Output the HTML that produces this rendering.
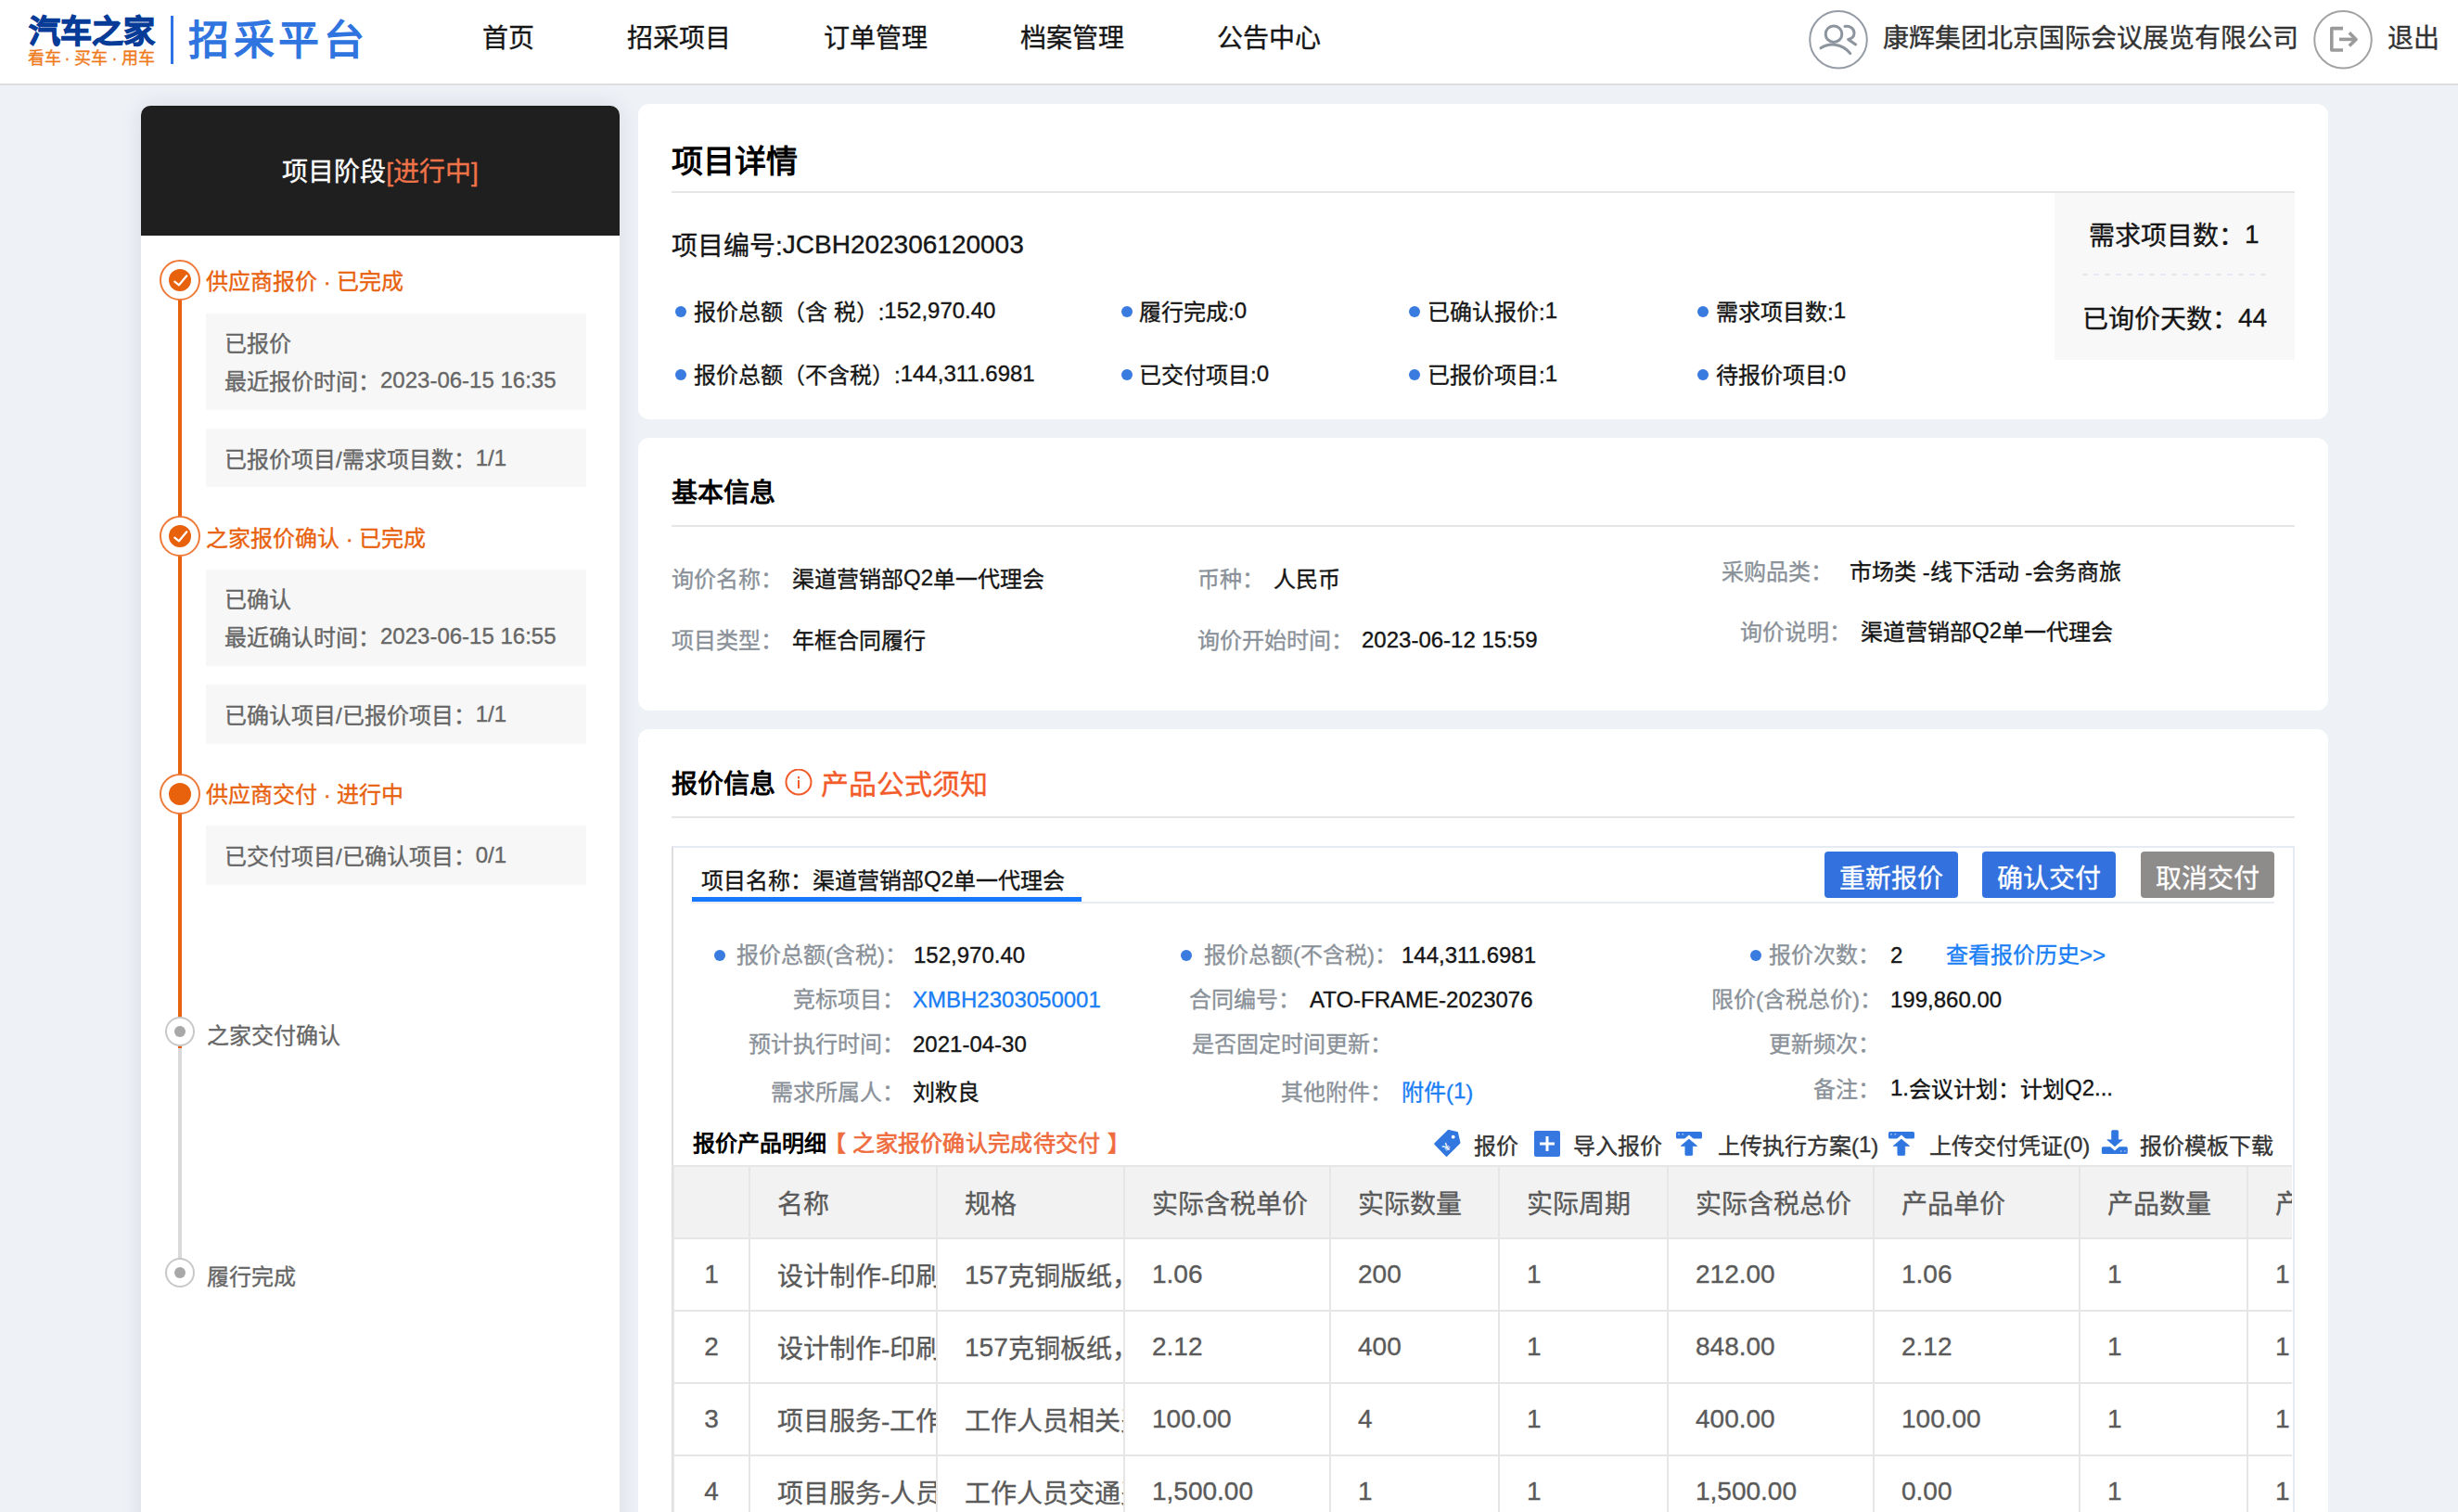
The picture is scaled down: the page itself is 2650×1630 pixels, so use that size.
<!DOCTYPE html>
<html lang="zh-CN">
<head>
<meta charset="utf-8">
<style>
html,body{margin:0;padding:0;}
body{width:2650px;height:1630px;overflow:hidden;position:relative;background:#eef1f6;font-family:"Liberation Sans",sans-serif;color:#151515;font-weight:500;-webkit-text-stroke-width:0.35px;}
.a{position:absolute;}
.t{position:absolute;white-space:nowrap;line-height:1;}
.s24{font-size:24px;}
.s28{font-size:28px;}
.L{position:relative;top:-2px;}
.b{font-weight:bold;-webkit-text-stroke-width:0;}
.hdr{left:0;top:0;width:2650px;height:90px;background:#fff;border-bottom:2px solid #dedede;}
.card{position:absolute;background:#fff;border-radius:12px;}
.div{position:absolute;height:2px;background:#e6e6e6;}
.dot{position:absolute;width:12px;height:12px;border-radius:50%;background:#3a7be0;}
.lbl{color:#8a9199;}
.gbox{position:absolute;left:222px;width:410px;background:#f7f7f7;}
.gt{color:#666;font-size:24px;}
.org{color:#e8620e;}
.btn{position:absolute;top:918px;width:144px;height:50px;border-radius:4px;color:#fff;font-size:28px;line-height:59px;text-align:center;overflow:hidden;}
.tb{position:absolute;top:1256px;left:725px;width:1746px;height:400px;overflow:hidden;}
.tb table{border-collapse:collapse;table-layout:fixed;width:1897px;font-size:28px;color:#5a5a5a;}
.tb td{border:2px solid #e6e6e6;height:76px;padding:0 0 0 29px;white-space:nowrap;overflow:hidden;}
.tb tr.h td{background:#f2f2f2;}
.tb td.c{text-align:center;padding:0;}
</style>
</head>
<body>
<!-- HEADER -->
<div class="a hdr"></div>
<div class="t b" style="left:31px;top:17px;font-size:34px;color:#063c98;letter-spacing:0px;-webkit-text-stroke:1.2px #063c98;">汽车之家</div>
<div class="t" style="left:30px;top:54px;font-size:18px;color:#ee7a1c;">看车</div>
<div class="t" style="left:57px;top:54px;font-size:18px;color:#ee7a1c;width:31px;text-align:center;">·</div>
<div class="t" style="left:80px;top:54px;font-size:18px;color:#ee7a1c;">买车</div>
<div class="t" style="left:108px;top:54px;font-size:18px;color:#ee7a1c;width:31px;text-align:center;">·</div>
<div class="t" style="left:131px;top:54px;font-size:18px;color:#ee7a1c;">用车</div>
<div class="a" style="left:184px;top:17px;width:3px;height:52px;background:#2d73e6;"></div>
<div class="t b" style="left:203px;top:22px;font-size:44px;color:#2f74df;letter-spacing:4.6px;">招采平台</div>

<div class="t s28" style="left:520px;top:28px;">首页</div>
<div class="t s28" style="left:676px;top:28px;">招采项目</div>
<div class="t s28" style="left:888px;top:28px;">订单管理</div>
<div class="t s28" style="left:1100px;top:28px;">档案管理</div>
<div class="t s28" style="left:1312px;top:28px;">公告中心</div>

<svg class="a" style="left:1949px;top:10px;" width="66" height="66" viewBox="0 0 66 66">
<circle cx="33" cy="32.8" r="30.8" fill="none" stroke="#959ca6" stroke-width="2"/>
<g fill="none" stroke="#8c949e" stroke-width="3" stroke-linecap="round" stroke-linejoin="round">
<circle cx="28" cy="26.7" r="8.8"/>
<path d="M14 41.8 C22 36.5 36 35.5 45.8 47.6"/>
<path d="M40 18.4 C46 17.6 50 21 50 25.6 C50 29.5 47.2 31.8 43.6 32.4 L51.6 38"/>
</g>
</svg>
<div class="t s28" style="left:2030px;top:28px;color:#333;">康辉集团北京国际会议展览有限公司</div>
<svg class="a" style="left:2493px;top:10px;" width="66" height="66" viewBox="0 0 66 66">
<circle cx="33" cy="32.8" r="30.8" fill="none" stroke="#a3a3a3" stroke-width="2"/>
<g fill="none" stroke="#9a9a9a" stroke-width="3.6" stroke-linejoin="round">
<path d="M33 20.6 H20.8 V44 H33"/>
<path d="M29 32.4 H46.5"/>
<path d="M39.8 25.2 L47 32.4 L39.8 39.6"/>
</g>
</svg>
<div class="t s28" style="left:2574px;top:28px;color:#333;">退出</div>

<!-- SIDEBAR -->
<div class="a" style="left:152px;top:114px;width:516px;height:1600px;background:#fff;border-radius:10px 10px 0 0;box-shadow:0 0 24px rgba(30,40,80,0.10);"></div>
<div class="a" style="left:152px;top:114px;width:516px;height:140px;background:#1f1f1f;border-radius:10px 10px 0 0;"></div>
<div class="t s28" style="left:152px;width:516px;text-align:center;top:172px;color:#fff;">项目阶段<span style="color:#ef7348">[进行中]</span></div>

<div class="gbox" style="top:338px;height:104px;"></div>
<div class="gbox" style="top:462px;height:63px;"></div>
<div class="gbox" style="top:614px;height:104px;"></div>
<div class="gbox" style="top:738px;height:64px;"></div>
<div class="gbox" style="top:890px;height:64px;"></div>

<div class="t org s24" style="left:222px;top:292px;">供应商报价 · 已完成</div>
<div class="t gt" style="left:242px;top:359px;">已报价</div>
<div class="t gt" style="left:242px;top:400px;">最近报价时间：<span class="L">2023-06-15</span> <span class="L">16:35</span></div>
<div class="t gt" style="left:242px;top:484px;">已报价项目/需求项目数：<span class="L">1/1</span></div>

<div class="t org s24" style="left:222px;top:569px;">之家报价确认 · 已完成</div>
<div class="t gt" style="left:242px;top:635px;">已确认</div>
<div class="t gt" style="left:242px;top:676px;">最近确认时间：<span class="L">2023-06-15</span> <span class="L">16:55</span></div>
<div class="t gt" style="left:242px;top:760px;">已确认项目/已报价项目：<span class="L">1/1</span></div>

<div class="t org s24" style="left:222px;top:845px;">供应商交付 · 进行中</div>
<div class="t gt" style="left:242px;top:912px;">已交付项目/已确认项目：<span class="L">0/1</span></div>

<div class="t gt" style="left:223px;top:1105px;">之家交付确认</div>
<div class="t gt" style="left:223px;top:1365px;">履行完成</div>

<div class="a" style="left:192px;top:322px;width:4px;height:808px;background:#e8620e;"></div>
<div class="a" style="left:192px;top:1130px;width:4px;height:228px;background:#d9d9d9;"></div>

<svg class="a" style="left:170px;top:278px;" width="48" height="48" viewBox="0 0 48 48">
<circle cx="24" cy="24" r="21" fill="#fff" stroke="#ee7a3a" stroke-width="2"/>
<circle cx="24" cy="24" r="12" fill="#e8620e"/>
<path d="M18.3 25.6 L23 29.3 L31.3 19.3" fill="none" stroke="#fff" stroke-width="2.2" stroke-linecap="round" stroke-linejoin="round"/>
</svg>
<svg class="a" style="left:170px;top:554px;" width="48" height="48" viewBox="0 0 48 48">
<circle cx="24" cy="24" r="21" fill="#fff" stroke="#ee7a3a" stroke-width="2"/>
<circle cx="24" cy="24" r="12" fill="#e8620e"/>
<path d="M18.3 25.6 L23 29.3 L31.3 19.3" fill="none" stroke="#fff" stroke-width="2.2" stroke-linecap="round" stroke-linejoin="round"/>
</svg>
<svg class="a" style="left:170px;top:832px;" width="48" height="48" viewBox="0 0 48 48">
<circle cx="24" cy="24" r="21" fill="#fff" stroke="#ee7a3a" stroke-width="2"/>
<circle cx="24" cy="24" r="12" fill="#e8620e"/>
</svg>
<svg class="a" style="left:176px;top:1094px;" width="36" height="36" viewBox="0 0 36 36">
<circle cx="18" cy="18" r="15" fill="#fff" stroke="#c8c8c8" stroke-width="2"/>
<circle cx="18" cy="18" r="6" fill="#a8a8a8"/>
</svg>
<svg class="a" style="left:176px;top:1354px;" width="36" height="36" viewBox="0 0 36 36">
<circle cx="18" cy="18" r="15" fill="#fff" stroke="#c8c8c8" stroke-width="2"/>
<circle cx="18" cy="18" r="6" fill="#a8a8a8"/>
</svg>

<!-- CARD 1 -->
<div class="card" style="left:688px;top:112px;width:1822px;height:340px;"></div>
<div class="t b" style="left:724px;top:157px;font-size:34px;color:#000;">项目详情</div>
<div class="div" style="left:724px;top:206px;width:1750px;"></div>
<div class="t s28" style="left:724px;top:252px;">项目编号:<span class="L">JCBH202306120003</span></div>


<div class="dot" style="left:728px;top:330px;"></div>
<div class="t s24" style="left:748px;top:325px;">报价总额（含 税）:<span class="L">152,970.40</span></div>
<div class="dot" style="left:728px;top:398px;"></div>
<div class="t s24" style="left:748px;top:393px;">报价总额（不含税）:<span class="L">144,311.6981</span></div>
<div class="dot" style="left:1209px;top:330px;"></div>
<div class="t s24" style="left:1228px;top:325px;">履行完成:<span class="L">0</span></div>
<div class="dot" style="left:1209px;top:398px;"></div>
<div class="t s24" style="left:1228px;top:393px;">已交付项目:<span class="L">0</span></div>
<div class="dot" style="left:1519px;top:330px;"></div>
<div class="t s24" style="left:1539px;top:325px;">已确认报价:<span class="L">1</span></div>
<div class="dot" style="left:1519px;top:398px;"></div>
<div class="t s24" style="left:1539px;top:393px;">已报价项目:<span class="L">1</span></div>
<div class="dot" style="left:1830px;top:330px;"></div>
<div class="t s24" style="left:1850px;top:325px;">需求项目数:<span class="L">1</span></div>
<div class="dot" style="left:1830px;top:398px;"></div>
<div class="t s24" style="left:1850px;top:393px;">待报价项目:<span class="L">0</span></div>
<div class="a" style="left:2215px;top:208px;width:259px;height:180px;background:#f8f8f9;"></div>
<div class="a" style="left:2245px;top:295px;width:200px;height:2px;background:repeating-linear-gradient(90deg,#e4e9f3 0 6px,transparent 6px 12px);"></div>
<div class="t s28" style="left:2252px;top:241px;">需求项目数：<span class="L">1</span></div>
<div class="t s28" style="left:2245px;top:331px;">已询价天数：<span class="L">44</span></div>

<!-- CARD 2 -->
<div class="card" style="left:688px;top:472px;width:1822px;height:294px;"></div>
<div class="t b s28" style="left:724px;top:518px;color:#000;">基本信息</div>
<div class="div" style="left:724px;top:566px;width:1750px;"></div>


<div class="t s24 lbl" style="left:724px;top:613px;">询价名称：</div>
<div class="t s24" style="left:854px;top:613px;">渠道营销部<span class="L">Q2</span>单一代理会</div>
<div class="t s24 lbl" style="left:724px;top:679px;">项目类型：</div>
<div class="t s24" style="left:854px;top:679px;">年框合同履行</div>
<div class="t s24 lbl" style="left:1291px;top:613px;">币种：</div>
<div class="t s24" style="left:1373px;top:613px;">人民币</div>
<div class="t s24 lbl" style="left:1291px;top:679px;">询价开始时间：</div>
<div class="t s24" style="left:1468px;top:678px;">2023-06-12 15:59</div>
<div class="t s24 lbl" style="left:1856px;top:605px;">采购品类：</div>
<div class="t s24" style="left:1994px;top:605px;">市场类 -线下活动 -会务商旅</div>
<div class="t s24 lbl" style="left:1876px;top:670px;">询价说明：</div>
<div class="t s24" style="left:2006px;top:670px;">渠道营销部<span class="L">Q2</span>单一代理会</div>

<!-- CARD 3 -->
<div class="card" style="left:688px;top:786px;width:1822px;height:900px;"></div>
<div class="t b s28" style="left:724px;top:832px;color:#000;">报价信息</div>
<div class="div" style="left:724px;top:880px;width:1750px;"></div>


<svg class="a" style="left:845px;top:829px;" width="32" height="30" viewBox="0 0 32 30">
<circle cx="16" cy="14" r="13.5" fill="none" stroke="#f35b2a" stroke-width="2"/>
<rect x="15" y="12" width="2" height="9" fill="#f35b2a"/><rect x="15" y="8" width="2" height="2.4" fill="#f35b2a"/>
</svg>
<div class="t" style="left:885px;top:831px;font-size:30px;color:#f35b2a;">产品公式须知</div>
<div class="a" style="left:724px;top:912px;width:1746px;height:800px;border:2px solid #e6eaf3;border-left-color:#dedede;border-bottom:none;"></div>
<div class="a" style="left:745px;top:972px;width:1707px;height:2px;background:#e8ecf3;"></div>
<div class="a" style="left:746px;top:967px;width:420px;height:5px;background:#1677ff;"></div>
<div class="t s24" style="left:756px;top:938px;">项目名称：渠道营销部<span class="L">Q2</span>单一代理会</div>
<div class="btn" style="left:1967px;background:#3372de;">重新报价</div>
<div class="btn" style="left:2137px;background:#3372de;">确认交付</div>
<div class="btn" style="left:2308px;background:#8e8b8b;">取消交付</div>

<div class="dot" style="left:770px;top:1024px;"></div>
<div class="t s24 lbl" style="left:794px;top:1018px;">报价总额(含税)：</div>
<div class="t s24" style="left:985px;top:1018px;">152,970.40</div>
<div class="t s24 lbl" style="left:855px;top:1066px;">竞标项目：</div>
<div class="t s24" style="left:984px;top:1066px;color:#1a7ef5;">XMBH2303050001</div>
<div class="t s24 lbl" style="left:807px;top:1114px;">预计执行时间：</div>
<div class="t s24" style="left:984px;top:1114px;">2021-04-30</div>
<div class="t s24 lbl" style="left:831px;top:1166px;">需求所属人：</div>
<div class="t s24" style="left:984px;top:1166px;">刘敉良</div>

<div class="dot" style="left:1273px;top:1024px;"></div>
<div class="t s24 lbl" style="left:1298px;top:1018px;">报价总额(不含税)：</div>
<div class="t s24" style="left:1511px;top:1018px;">144,311.6981</div>
<div class="t s24 lbl" style="left:1282px;top:1066px;">合同编号：</div>
<div class="t s24" style="left:1412px;top:1066px;">ATO-FRAME-2023076</div>
<div class="t s24 lbl" style="left:1285px;top:1114px;">是否固定时间更新：</div>
<div class="t s24 lbl" style="left:1381px;top:1166px;">其他附件：</div>
<div class="t s24" style="left:1511px;top:1166px;color:#1a7ef5;">附件(<span class="L">1</span>)</div>

<div class="dot" style="left:1887px;top:1024px;"></div>
<div class="t s24 lbl" style="left:1907px;top:1018px;">报价次数：</div>
<div class="t s24" style="left:2038px;top:1018px;">2</div>
<div class="t s24" style="left:2098px;top:1018px;color:#1a7ef5;">查看报价历史&gt;&gt;</div>
<div class="t s24 lbl" style="left:1845px;top:1066px;">限价(含税总价)：</div>
<div class="t s24" style="left:2038px;top:1066px;">199,860.00</div>
<div class="t s24 lbl" style="left:1907px;top:1114px;">更新频次：</div>
<div class="t s24 lbl" style="left:1955px;top:1163px;">备注：</div>
<div class="t s24" style="left:2038px;top:1163px;"><span class="L">1.</span>会议计划：计划<span class="L">Q2...</span></div>

<div class="t s24 b" style="left:747px;top:1221px;color:#000;">报价产品明细</div>
<div class="t s24" style="left:888px;top:1221px;color:#ef6c3e;-webkit-text-stroke-width:0.7px;letter-spacing:0.3px;">【 之家报价确认完成待交付 】</div>

<svg class="a" style="left:1544px;top:1216px;" width="34" height="34" viewBox="0 0 34 34">
<path d="M16.8 2.2 Q17.4 1.7 18.2 1.9 L27 4 Q27.8 4.2 28 5 L30.4 15.4 Q30.6 16.3 29.9 17 L16.3 30.6 Q15.5 31.4 14.7 30.6 L2.6 17.9 Q1.8 17 2.6 16.2 Z" fill="#3276e0"/>
<circle cx="22.7" cy="9.7" r="1.9" fill="#fff"/>
<text x="0" y="0" font-size="12" font-weight="bold" fill="#e8f0fc" transform="translate(16.2 21.5) rotate(-45)" text-anchor="middle" dominant-baseline="middle" font-family="Liberation Sans">¥</text>
</svg>
<div class="t s24" style="left:1589px;top:1224px;color:#333;">报价</div>
<svg class="a" style="left:1653px;top:1218px;" width="30" height="30" viewBox="0 0 30 30">
<rect x="1" y="1" width="28" height="28" rx="2" fill="#3677e0"/>
<rect x="7" y="13.5" width="16" height="3" fill="#fff"/><rect x="13.5" y="7" width="3" height="16" fill="#fff"/>
</svg>
<div class="t s24" style="left:1696px;top:1224px;color:#333;">导入报价</div>
<svg class="a" style="left:1806px;top:1218px;" width="30" height="30" viewBox="0 0 30 30">
<rect x="1" y="2" width="28" height="7.6" rx="1.6" fill="#3076e0"/>
<circle cx="4" cy="4.8" r="1" fill="#93b5ef"/><circle cx="8.3" cy="4.8" r="1" fill="#93b5ef"/>
<path d="M14.9 5.6 L21 10.8 L8.8 10.8 Z" fill="#fff"/>
<path d="M14.9 10.1 L23.6 17.4 L18.7 17.4 L18.7 26.4 Q18.7 27.6 17.5 27.6 L12.1 27.6 Q10.9 27.6 10.9 26.4 L10.9 17.4 L6.2 17.4 Z" fill="#3076e0" stroke="#3076e0" stroke-width="0.8" stroke-linejoin="round"/>
</svg>
<div class="t s24" style="left:1852px;top:1224px;color:#333;">上传执行方案(<span class="L">1</span>)</div>
<svg class="a" style="left:2035px;top:1218px;" width="30" height="30" viewBox="0 0 30 30">
<rect x="1" y="2" width="28" height="7.6" rx="1.6" fill="#3076e0"/>
<circle cx="4" cy="4.8" r="1" fill="#93b5ef"/><circle cx="8.3" cy="4.8" r="1" fill="#93b5ef"/>
<path d="M14.9 5.6 L21 10.8 L8.8 10.8 Z" fill="#fff"/>
<path d="M14.9 10.1 L23.6 17.4 L18.7 17.4 L18.7 26.4 Q18.7 27.6 17.5 27.6 L12.1 27.6 Q10.9 27.6 10.9 26.4 L10.9 17.4 L6.2 17.4 Z" fill="#3076e0" stroke="#3076e0" stroke-width="0.8" stroke-linejoin="round"/>
</svg>
<div class="t s24" style="left:2080px;top:1224px;color:#333;">上传交付凭证(<span class="L">0</span>)</div>
<svg class="a" style="left:2264px;top:1218px;" width="32" height="30" viewBox="0 0 32 30">
<path d="M12.5 2 Q12.5 0.6 13.9 0.6 L18.4 0.6 Q19.8 0.6 19.8 2 L19.8 10.7 L24.4 10.7 L16 17.9 L7.7 10.7 L12.5 10.7 Z" fill="#3076e0" stroke="#3076e0" stroke-width="0.6" stroke-linejoin="round"/>
<path d="M3.4 18.3 L11.2 18.3 L16 22.6 L20.7 18.3 L28.3 18.3 Q29.8 18.3 29.8 19.8 L29.8 24.5 Q29.8 26 28.3 26 L3.4 26 Q1.9 26 1.9 24.5 L1.9 19.8 Q1.9 18.3 3.4 18.3 Z" fill="#3076e0"/>
<circle cx="22.7" cy="23.1" r="1" fill="#93b5ef"/><circle cx="26.9" cy="23.1" r="1" fill="#93b5ef"/>
</svg>
<div class="t s24" style="left:2307px;top:1224px;color:#333;">报价模板下载</div>

<div class="tb"><table>
<colgroup><col style="width:82px"><col style="width:202px"><col style="width:202px"><col style="width:222px"><col style="width:182px"><col style="width:182px"><col style="width:222px"><col style="width:222px"><col style="width:181px"><col style="width:200px"></colgroup>
<tr class="h"><td></td><td>名称</td><td>规格</td><td>实际含税单价</td><td>实际数量</td><td>实际周期</td><td>实际含税总价</td><td>产品单价</td><td>产品数量</td><td>产品周期</td></tr>
<tr><td class="c">1</td><td>设计制作-印刷</td><td><span class="L">157</span>克铜版纸，</td><td>1.06</td><td>200</td><td>1</td><td>212.00</td><td>1.06</td><td>1</td><td>1</td></tr>
<tr><td class="c">2</td><td>设计制作-印刷</td><td><span class="L">157</span>克铜板纸，</td><td>2.12</td><td>400</td><td>1</td><td>848.00</td><td>2.12</td><td>1</td><td>1</td></tr>
<tr><td class="c">3</td><td>项目服务-工作</td><td>工作人员相关费</td><td>100.00</td><td>4</td><td>1</td><td>400.00</td><td>100.00</td><td>1</td><td>1</td></tr>
<tr><td class="c">4</td><td>项目服务-人员</td><td>工作人员交通费</td><td>1,500.00</td><td>1</td><td>1</td><td>1,500.00</td><td>0.00</td><td>1</td><td>1</td></tr>
</table></div>

</body>
</html>
